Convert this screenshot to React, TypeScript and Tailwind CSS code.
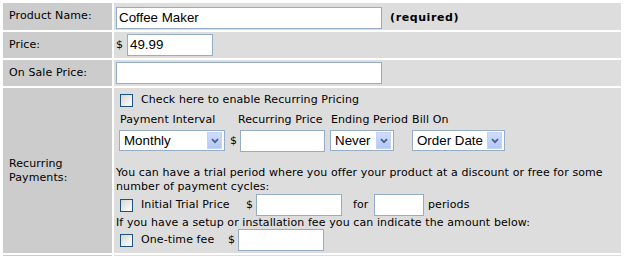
import React from "react";

function TextBox({ className = "", value = "" }: { className?: string; value?: string }) {
  return (
    <div
      className={
        "h-[22px] shrink-0 border border-[#95adc6] bg-white flex items-center pl-[2px] font-['Liberation_Sans',Arial,sans-serif] text-[13.33px] tracking-normal text-black leading-none " +
        className
      }
    >
      {value}
    </div>
  );
}

function Dropdown({ className = "", value }: { className?: string; value: string }) {
  return (
    <div
      className={
        "h-[21px] shrink-0 border border-[#95adc6] bg-white flex items-center justify-between pl-[4px] pr-[2px] font-['Liberation_Sans',Arial,sans-serif] text-[13.33px] tracking-normal text-black leading-none " +
        className
      }
    >
      <span>{value}</span>
      <div className="w-[15px] h-[17px] bg-linear-to-b from-[#cfdcfd] to-[#b3c8f7] border border-[#c3d3f8] flex items-center justify-center">
        <svg width="8" height="6" viewBox="0 0 8 6">
          <path d="M1 1.2 L4 4.2 L7 1.2" stroke="#4d6185" strokeWidth="1.8" fill="none" />
        </svg>
      </div>
    </div>
  );
}

function Check() {
  return (
    <div className="w-[13px] h-[13px] shrink-0 border border-[#1c5180] bg-linear-to-br from-[#d6d6d0] to-white" />
  );
}

function Label({ children, className = "" }: { children: React.ReactNode; className?: string }) {
  return (
    <div className={"bg-[#cccccc] flex items-center pl-[6px] text-black " + className}>
      {children}
    </div>
  );
}

export default function App() {
  return (
    <div className="w-[628px] h-[256px] overflow-hidden bg-white pt-[3px] pl-[3px] font-['DejaVu_Sans',Verdana,sans-serif] text-[11px] tracking-[0.1px] text-black">
      <div className="grid grid-cols-[109px_507px] gap-[2px]">
        {/* Row 1 */}
        <Label>Product Name:</Label>
        <div className="bg-[#dddddd] h-[27px] pl-[2px] pt-[4px]">
          <div className="flex items-center h-[22px]">
            <TextBox className="w-[266px] text-[13.8px]" value="Coffee Maker" />
            <span className="ml-[8px] font-bold tracking-[0.6px] whitespace-nowrap">(required)</span>
          </div>
        </div>

        {/* Row 2 */}
        <Label>Price:</Label>
        <div className="bg-[#dddddd] h-[26px] pl-[2px] flex items-center">
          <span className="w-[11px]">$</span>
          <TextBox className="w-[86px]" value="49.99" />
        </div>

        {/* Row 3 */}
        <Label>On Sale Price:</Label>
        <div className="bg-[#dddddd] h-[26px] pl-[2px] flex items-center">
          <TextBox className="w-[266px]" />
        </div>

        {/* Row 4 */}
        <Label className="leading-[14px]">
          <div>
            Recurring
            <br />
            Payments:
          </div>
        </Label>
        <div className="bg-[#dddddd] h-[165px] pl-[2px] pt-[5px] flex flex-col whitespace-nowrap">
          <div className="h-[15px] flex items-center pl-[4px]">
            <Check />
            <span className="ml-[8px]">Check here to enable Recurring Pricing</span>
          </div>
          <div className="h-[14px] mt-[5px] flex items-center pl-[4px]">
            <span className="w-[118px]">Payment Interval</span>
            <span className="w-[93px]">Recurring Price</span>
            <span className="w-[81px]">Ending Period</span>
            <span>Bill On</span>
          </div>
          <div className="h-[22px] mt-[3px] flex items-start pl-[3px]">
            <Dropdown className="w-[106px]" value="Monthly" />
            <span className="ml-[5px] w-[10px] h-[22px] flex items-center">$</span>
            <TextBox className="w-[85px]" />
            <Dropdown className="ml-[5px] w-[64px]" value="Never" />
            <Dropdown className="ml-[18px] w-[93px]" value="Order Date" />
          </div>
          <div className="mt-[14px] leading-[14px]">
            You can have a trial period where you offer your product at a discount or free for some
            <br />
            number of payment cycles:
          </div>
          <div className="h-[22px] flex items-center pl-[4px]">
            <Check />
            <span className="ml-[8px] w-[105px]">Initial Trial Price</span>
            <span className="w-[10px]">$</span>
            <TextBox className="w-[86px]" />
            <span className="ml-[11px] w-[21px]">for</span>
            <TextBox className="w-[50px]" />
            <span className="ml-[4px]">periods</span>
          </div>
          <div className="h-[13px] flex items-center leading-[13px]">
            If you have a setup or installation fee you can indicate the amount below:
          </div>
          <div className="h-[22px] flex items-center pl-[4px]">
            <Check />
            <span className="ml-[8px] w-[87px]">One-time fee</span>
            <span className="w-[10px]">$</span>
            <TextBox className="w-[86px]" />
          </div>
        </div>

        {/* Row 5 (partially visible) */}
        <div className="bg-[#cccccc] h-[26px]" />
        <div className="bg-[#dddddd] h-[26px]" />
      </div>
    </div>
  );
}
